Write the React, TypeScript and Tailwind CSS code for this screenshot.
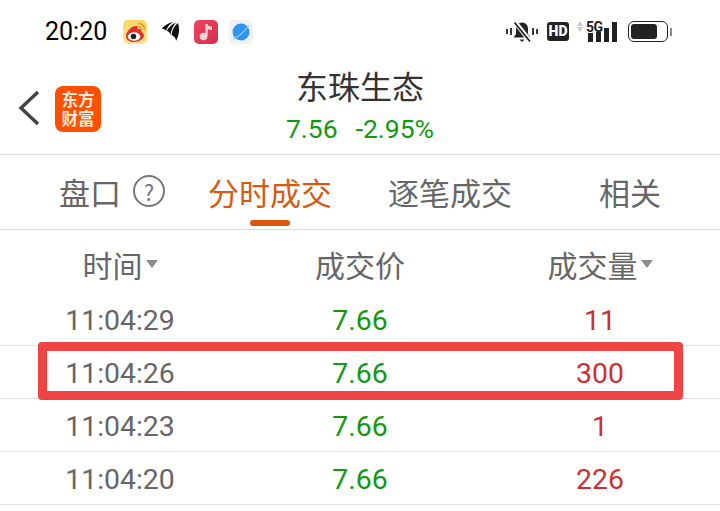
const cjk = "font-['Noto_Sans_CJK_SC',sans-serif]";
const num = "font-['Roboto',sans-serif]";

const rows = [
    { time: "11:04:29", price: "7.66", vol: "11" },
    { time: "11:04:26", price: "7.66", vol: "300" },
    { time: "11:04:23", price: "7.66", vol: "1" },
    { time: "11:04:20", price: "7.66", vol: "226" },
];

const Caret = () => (
    <svg width="12" height="8" viewBox="0 0 12 8" className="ml-[3px] mt-[1px]">
        <path d="M0 0H12L6 8Z" fill="#8c8c8c" />
    </svg>
);

const StatusLeft = () => (
    <div className="flex items-center">
        <div className={`${num} text-[25px] leading-none text-black w-[78px] ml-[45px]`}>20:20</div>
        <div className="w-[24px] h-[24px] rounded-[5px] bg-gradient-to-b from-[#fbd75f] to-[#fbe391] flex items-center justify-center">
            <svg width="23" height="22" viewBox="0 0 23 22">
                <path d="M2 15C2 10 8 5 12 5C14 5 14 7 13.500 8.500C16 7.500 18 8.500 17.500 11C19 11.500 20 13 20 14.500C20 18 15 21 10 21C5 21 2 18.500 2 15Z" fill="#e3302c" />
                <ellipse cx="10" cy="15.500" rx="6.200" ry="4.300" fill="#fff" />
                <circle cx="9.500" cy="15.500" r="2.700" fill="#222" />
                <path d="M14 2.500C17.500 2 21 5 20.500 9" stroke="#e8962c" strokeWidth="1.600" fill="none" />
                <path d="M14.500 5.800C16.200 5.500 18 7 17.600 9" stroke="#e8962c" strokeWidth="1.400" fill="none" />
            </svg>
        </div>
        <svg width="18" height="20" viewBox="0 0 18 20" className="ml-[15px]">
            <path d="M0 7C1 4 7 1 11 0C8 2 5 5 4 9C3 7 1.500 7 0 7Z" fill="#111" />
            <path d="M5 9C6 6 10 2 14 0.500C11 4 9 8 8.500 13C8 11 7 9.500 5 9Z" fill="#111" />
            <path d="M9.500 13C10 8 13 3 16 1C18 7 17 14 14 19C14 16 12 14 9.500 13Z" fill="#111" />
        </svg>
        <div className="w-[24px] h-[24px] rounded-[5px] bg-gradient-to-br from-[#f0445f] to-[#d62f4f] ml-[14px] flex items-center justify-center">
            <svg width="14" height="18" viewBox="0 0 14 18">
                <path d="M7.500 1V13" stroke="#fbd3da" strokeWidth="2.400" />
                <path d="M7 1C9 3 11 3.500 13 3.500V7C10.500 7 8.500 6 7 5Z" fill="#fbd3da" />
                <circle cx="4.500" cy="13.500" r="3.800" fill="#fbd3da" />
            </svg>
        </div>
        <div className="w-[24px] h-[24px] rounded-[5px] bg-[#eff2f5] ml-[11px] flex items-center justify-center">
            <svg width="20" height="20" viewBox="0 0 20 20">
                <circle cx="10" cy="10" r="8.500" fill="#2f93f2" />
                <path d="M2 17C7 15 14 9 18 3" stroke="#9ad0f9" strokeWidth="1.300" fill="none" />
            </svg>
        </div>
    </div>
);

const MutedBell = () => (
    <svg width="32" height="22" viewBox="0 0 32 22">
        <path d="M16 1.500C12 1.500 10 4.500 10 8V13L7.500 16.500H24.500L22 13V8C22 4.500 20 1.500 16 1.500Z" fill="#222" />
        <path d="M13.500 18.500H18.500L16 21Z" fill="#222" />
        <path d="M9 1L24 20" stroke="#fff" strokeWidth="4.500" />
        <path d="M8.500 1.500L24 20.500" stroke="#222" strokeWidth="1.800" />
        <path d="M1 8V13M5 7V14M27 7V14M31 8V13" stroke="#222" strokeWidth="1.800" />
    </svg>
);

const StatusRight = () => (
    <div className="flex items-center mr-[48px] text-[#222]">
        <MutedBell />
        <div className={`${num} ml-[9px] w-[22px] h-[19px] rounded-[3px] bg-[#222] text-white text-[14px] font-black leading-[19px] text-center`}>
            HD
        </div>
        <div className="relative ml-[8px] w-[40px] h-[21px] flex items-end justify-end gap-[3px]">
            <div className={`${num} absolute top-[-1px] left-[9px] text-[14px] font-bold leading-none tracking-[-0.5px] text-[#222]`}>5G</div>
            <div className="absolute top-0 left-0 w-[7px] h-[11px] flex flex-col gap-[1px]">
                <div className="w-0 h-0 border-x-[3.500px] border-x-transparent border-b-[5px] border-b-[#c8c8c8]" />
                <div className="w-0 h-0 border-x-[3.500px] border-x-transparent border-t-[5px] border-t-[#c8c8c8]" />
            </div>
            <div className="w-[5px] h-[9px] bg-[#222]" />
            <div className="w-[5px] h-[10px] bg-[#222]" />
            <div className="w-[5px] h-[14px] bg-[#222]" />
            <div className="w-[5px] h-[20px] bg-[#222]" />
        </div>
        <div className="ml-[11px] flex items-center">
            <div className="w-[40px] h-[21px] rounded-[6px] border-[1.500px] border-[#222] p-[2px]">
                <div className="w-[26px] h-full rounded-[3px] bg-[#222]" />
            </div>
            <div className="ml-[2px] w-[2px] h-[8px] bg-[#888]" />
        </div>
    </div>
);

const Logo = () => (
    <div className="w-[46px] h-[46px] rounded-[8px] bg-[#fb5000] flex items-center justify-center">
        <div className={`${cjk} w-[34px] text-center text-[#fde9da] text-[16.5px] font-bold leading-[19px]`}>东方财富</div>
    </div>
);

const Header = () => (
    <div className="relative h-[92px] border-b border-[#dcdcdc]">
        <div className="flex items-center pl-[18px] pt-[3px] h-[86px]">
            <svg width="22" height="38" viewBox="0 0 22 38">
                <path d="M20 3L3 19L20 35" stroke="#444" strokeWidth="3.400" fill="none" />
            </svg>
            <div className="ml-[15px] mt-[2px]">
                <Logo />
            </div>
        </div>
        <div className="absolute inset-x-0 top-0 flex flex-col items-center">
            <div className={`${cjk} text-[32px] leading-[36px] mt-[4px] text-[#333]`}>东珠生态</div>
            <div className={`${num} text-[26.5px] leading-[30px] mt-[11px] text-[#109a10] flex gap-[18px]`}>
                <span>7.56</span>
                <span>-2.95%</span>
            </div>
        </div>
    </div>
);

const Tabs = () => (
    <div className={`${cjk} relative h-[75px] border-b border-[#dcdcdc] flex items-center text-[31px] leading-none text-[#666] pb-[2px]`}>
        <span className="ml-[59px]">盘口</span>
        <span className="ml-[12px] w-[32px] h-[32px] rounded-full border-2 border-[#777] flex items-center justify-center text-[22px] text-[#777]">?</span>
        <span className="ml-[43px] text-[#d9590f]">分时成交</span>
        <span className="ml-[56px]">逐笔成交</span>
        <span className="ml-[87px]">相关</span>
        <div className="absolute left-[250px] bottom-[3px] w-[40px] h-[6px] rounded-full bg-[#de5509]" />
    </div>
);

const TableHead = () => (
    <div className={`${cjk} grid grid-cols-[240px_240px_240px] h-[63px] pt-[4px] items-center text-[30px] leading-none text-[#666]`}>
        <div className="flex items-center justify-center"><span>时间</span><Caret /></div>
        <div className="flex items-center justify-center"><span>成交价</span></div>
        <div className="flex items-center justify-center"><span>成交量</span><Caret /></div>
    </div>
);

export default function App() {
    return (
        <div className="relative w-[720px] h-[511px] overflow-hidden bg-white">
            <div className="h-[63px] flex items-center justify-between">
                <StatusLeft />
                <StatusRight />
            </div>
            <Header />
            <Tabs />
            <TableHead />
            {rows.map((r) => (
                <div key={r.time} className={`${num} grid grid-cols-[240px_240px_240px] h-[53px] pt-[4px] items-center text-center text-[28.4px] leading-none border-b border-[#e2e2e2]`}>
                    <div className="text-[#666]">{r.time}</div>
                    <div className="text-[#109a10]">{r.price}</div>
                    <div className="text-[#cf2f2f]">{r.vol}</div>
                </div>
            ))}
            <div className="absolute left-[38px] top-[342px] w-[645px] h-[58px] border-[9px] border-[#ef4444] rounded-[4px]" />
        </div>
    );
}
